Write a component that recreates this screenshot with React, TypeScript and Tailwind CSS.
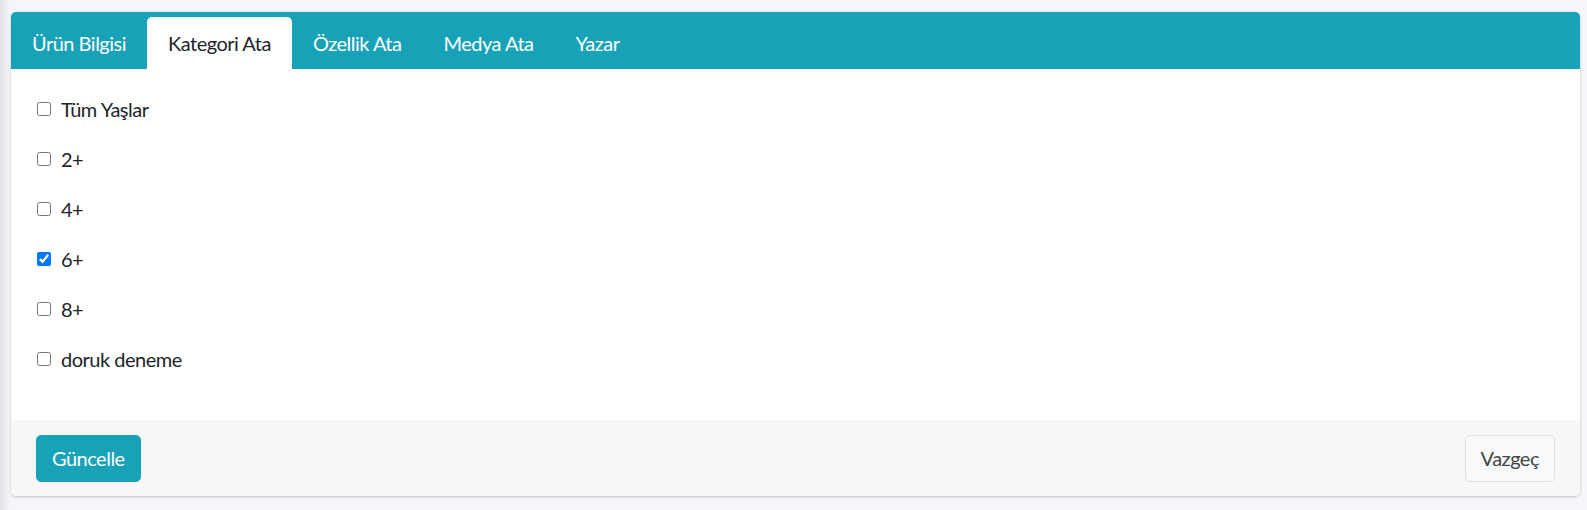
import React from "react";

const tabs = ["Ürün Bilgisi", "Kategori Ata", "Özellik Ata", "Medya Ata", "Yazar"];
const items = [
  { label: "Tüm Yaşlar", checked: false },
  { label: "2+", checked: false },
  { label: "4+", checked: false },
  { label: "6+", checked: true },
  { label: "8+", checked: false },
  { label: "doruk deneme", checked: false },
];

export default function App() {
  return (
    <div
      className="min-h-[510px] w-full bg-[#f4f6f9] bg-[linear-gradient(to_right,#dfe1e5_0px,#f4f6f9_10px,#f4f6f9_100%)] pt-[12px] pl-[11px] pr-[7px] pb-[14px] text-[#212529] tracking-[-0.5px]"
      style={{ fontFamily: "Lato, 'Liberation Sans', sans-serif" }}
    >
      <div className="flex h-[484px] flex-col rounded-[5px] bg-white shadow-[0_0_1px_rgba(0,0,0,0.125),0_1px_3px_rgba(0,0,0,0.2)]">
        <div className="flex h-[57px] items-end rounded-t-[5px] bg-[#17a2b8]">
          {tabs.map((t, i) => (
            <div
              key={t}
              className={
                i === 1
                  ? "flex h-[52px] items-center rounded-t-[5px] bg-white px-[21px] text-[20px] leading-[30px] text-[#212529]"
                  : "flex h-[52px] items-center px-[21px] text-[20px] leading-[30px] text-white"
              }
            >
              {t}
            </div>
          ))}
        </div>
        <div className="flex flex-1 flex-col px-[25px] pt-[25px]">
          {items.map((it) => (
            <label key={it.label} className="mb-[20px] flex h-[30px] items-center text-[20px] leading-[30px]">
              <input
                type="checkbox"
                defaultChecked={it.checked}
                className="m-0 ml-[1px] h-[14px] w-[14px] accent-[#0075ff]"
              />
              <span className="ml-[10px]">{it.label}</span>
            </label>
          ))}
        </div>
        <div className="flex h-[76px] items-center justify-between rounded-b-[5px] bg-[#f7f7f7] px-[25px]">
          <button className="h-[47px] rounded-[5px] border border-[#17a2b8] bg-[#17a2b8] px-[15px] text-[20px] leading-[30px] text-white">
            Güncelle
          </button>
          <button className="h-[47px] rounded-[5px] border border-[#dddddd] bg-[#f8f9fa] px-[15px] text-[20px] leading-[30px] text-[#444444]">
            Vazgeç
          </button>
        </div>
      </div>
    </div>
  );
}
